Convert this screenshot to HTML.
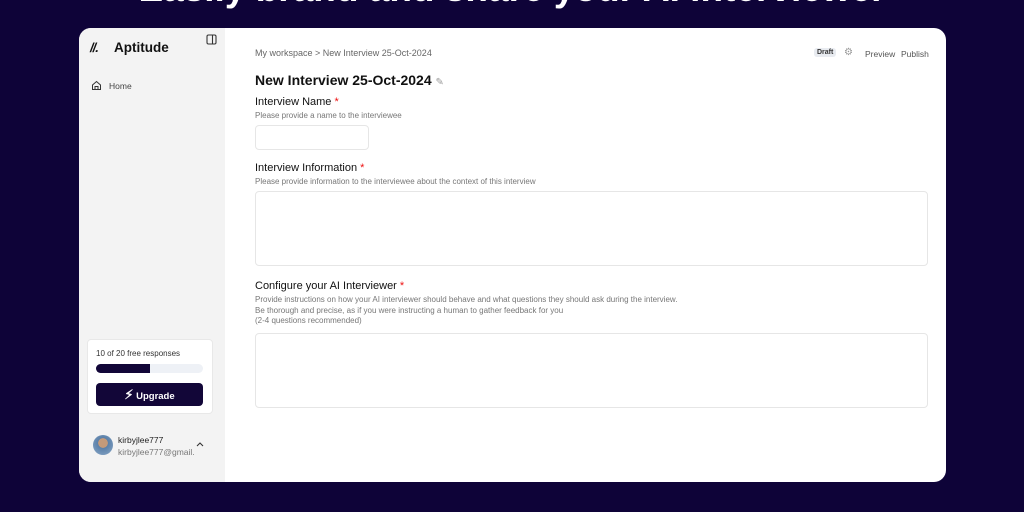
<!DOCTYPE html>
<html><head><meta charset="utf-8"><style>
*{box-sizing:border-box;margin:0;padding:0}
body{width:1024px;height:512px;background:#0e0338;font-family:"Liberation Sans",sans-serif;position:relative;overflow:hidden}
.hero{position:absolute;left:0;width:1024px;top:-31px;text-align:center;color:#fff;font-weight:bold;font-size:37px;line-height:40px;white-space:nowrap}
.card{position:absolute;left:79px;top:28px;width:867px;height:454px;background:#fff;border-radius:12px;overflow:hidden}
.side{position:absolute;left:0;top:0;width:146px;height:454px;background:#f3f3f3}
.abs{position:absolute}
.lab{font-size:11px;color:#111}
.lab b{color:#e11;font-weight:normal}
.hint{font-size:8px;color:#777}
.box{position:absolute;border:1px solid #e6e6e6;border-radius:4px;background:#fff}
</style></head><body>
<div class="hero">Easily brand and share your AI interviewer</div>
<div class="card">
 <div class="side">
  <div class="abs" style="left:11px;top:12px;font-weight:bold;font-size:13px;color:#111;font-style:italic;letter-spacing:-1px">//.</div>
  <div class="abs" style="left:35px;top:12px;font-size:13.5px;color:#111;font-weight:bold">Aptitude</div>
  <svg class="abs" style="left:127px;top:6px" width="11" height="11" viewBox="0 0 11 11"><rect x="1" y="1" width="9" height="9" rx="1.5" fill="none" stroke="#333" stroke-width="1.1"/><line x1="6.5" y1="1" x2="6.5" y2="10" stroke="#333" stroke-width="1.1"/></svg>
  <svg class="abs" style="left:12px;top:52px" width="11" height="11" viewBox="0 0 11 11"><path d="M1.5 5 L5.5 1.5 L9.5 5 V9.5 H1.5Z M4 9.5 V6.5 H7 V9.5" fill="none" stroke="#333" stroke-width="1"/></svg>
  <div class="abs" style="left:30px;top:53px;font-size:8.5px;color:#444">Home</div>
  <div class="abs" style="left:8px;top:311px;width:126px;height:75px;background:#fff;border:1px solid #e8e8e8;border-radius:4px">
   <div class="abs" style="left:8px;top:9px;font-size:8px;color:#333">10 of 20 free responses</div>
   <div class="abs" style="left:8px;top:24px;width:107px;height:9px;border-radius:5px;background:#eef1f6"><div style="width:54px;height:9px;border-radius:5px 0 0 5px;background:#120638"></div></div>
   <div class="abs" style="left:8px;top:43px;width:107px;height:23px;border-radius:4px;background:#120638;color:#fff;font-weight:bold;font-size:9.5px;line-height:23px;text-align:center"><span style="font-size:13px">&#x26A1;&#xFE0E;</span> Upgrade</div>
  </div>
  <div class="abs" style="left:14px;top:407px;width:20px;height:20px;border-radius:50%;background:radial-gradient(circle at 50% 40%,#c49a7a 30%,#5a7fa8 32%,#89a8c8)"></div>
  <div class="abs" style="left:39px;top:407px;font-size:8.5px;color:#222">kirbyjlee777</div>
  <div class="abs" style="left:39px;top:419px;font-size:8.5px;color:#777">kirbyjlee777@gmail.</div>
  <svg class="abs" style="left:117px;top:413px" width="8" height="6" viewBox="0 0 8 6"><path d="M1 5 L4 2 L7 5" fill="none" stroke="#333" stroke-width="1.1"/></svg>
 </div>
 <div class="abs" style="left:176px;top:20px;font-size:9px;color:#666">My workspace &gt; New Interview 25-Oct-2024</div>
 <div class="abs" style="left:735px;top:20px;padding:1px 3px;background:#e8ebf0;border-radius:3px;font-size:7px;font-weight:bold;color:#333">Draft</div>
 <div class="abs" style="left:765px;top:19px;font-size:10px;color:#999">&#9881;</div>
 <div class="abs" style="left:786px;top:21px;font-size:8.5px;color:#555">Preview</div>
 <div class="abs" style="left:822px;top:21px;font-size:8.5px;color:#555">Publish</div>
 <div class="abs" style="left:176px;top:44px;font-size:14px;font-weight:bold;color:#111">New Interview 25-Oct-2024 <span style="font-weight:normal;color:#999;font-size:10px">&#9998;</span></div>
 <div class="abs lab" style="left:176px;top:68px">Interview Name <b>*</b></div>
 <div class="abs hint" style="left:176px;top:83px">Please provide a name to the interviewee</div>
 <div class="box" style="left:176px;top:97px;width:114px;height:25px"></div>
 <div class="abs lab" style="left:176px;top:134px">Interview Information <b>*</b></div>
 <div class="abs hint" style="left:176px;top:149px">Please provide information to the interviewee about the context of this interview</div>
 <div class="box" style="left:176px;top:163px;width:673px;height:75px"></div>
 <div class="abs lab" style="left:176px;top:252px">Configure your AI Interviewer <b>*</b></div>
 <div class="abs hint" style="left:176px;top:267px;line-height:10.5px">Provide instructions on how your AI interviewer should behave and what questions they should ask during the interview.<br>Be thorough and precise, as if you were instructing a human to gather feedback for you<br>(2-4 questions recommended)</div>
 <div class="box" style="left:176px;top:305px;width:673px;height:75px"></div>
</div>
</body></html>
